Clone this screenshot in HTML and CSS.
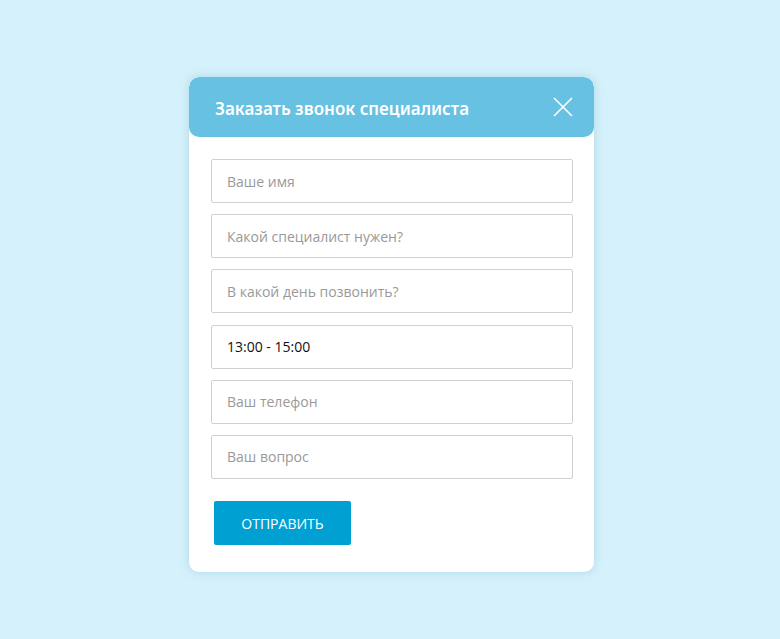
FILE: index.html
```html
<!DOCTYPE html>
<html lang="ru">
<head>
<meta charset="utf-8">
<title>Заказать звонок специалиста</title>
<link rel="stylesheet" href="styles.css">
</head>
<body>
<div class="page">
  <div class="modal">
    <div class="modal-header">
      <h2 class="modal-title">Заказать звонок специалиста</h2>
      <button class="close" type="button" aria-label="Закрыть">
        <svg width="20" height="20" viewBox="0 0 20 20"><path d="M1 1 L19 19 M19 1 L1 19" stroke="#fff" stroke-width="1.6" fill="none"/></svg>
      </button>
    </div>
    <form class="modal-body">
      <input class="field" type="text" placeholder="Ваше имя">
      <input class="field" type="text" placeholder="Какой специалист нужен?">
      <input class="field" type="text" placeholder="В какой день позвонить?">
      <input class="field" type="text" value="13:00 - 15:00">
      <input class="field" type="text" placeholder="Ваш телефон">
      <input class="field" type="text" placeholder="Ваш вопрос">
      <div class="actions">
        <button class="submit" type="button">Отправить</button>
      </div>
    </form>
  </div>
</div>
</body>
</html>
```
FILE: styles.css
```css
html, body {
  margin: 0;
  padding: 0;
  background: #d5f1fb;
  font-family: "Open Sans", "Noto Sans", sans-serif;
}
.page {
  width: 780px;
  height: 639px;
  display: flex;
  justify-content: center;
  align-items: flex-start;
  padding-top: 77px;
  box-sizing: border-box;
}
.modal {
  width: 405px;
  margin-left: 3px;
  background: #fff;
  border-radius: 10px;
  box-shadow: 0 0 10px rgba(100, 170, 200, 0.35);
  overflow: hidden;
}
.modal-header {
  height: 60px;
  background: #66c1e2;
  display: flex;
  align-items: center;
  justify-content: space-between;
  padding: 0 21px 0 26px;
  border-radius: 10px;
}
.modal-title {
  margin: 0;
  color: #fff;
  font-family: "Noto Sans", "Open Sans", sans-serif;
  font-size: 17px;
  font-weight: 600;
  letter-spacing: 0;
  position: relative;
  top: 1px;
}
.close {
  background: none;
  border: 0;
  padding: 0;
  width: 20px;
  height: 20px;
  display: block;
  cursor: pointer;
}
.close svg { display: block; }
.modal-body {
  display: flex;
  flex-direction: column;
  gap: 11.2px;
  padding: 22px 21px 27px 22px;
}
.field {
  display: block;
  height: 44px;
  box-sizing: border-box;
  border: 1px solid #d0d0d0;
  border-radius: 2px;
  padding: 0 15px;
  font-family: "Open Sans", sans-serif;
  font-size: 14px;
  color: #111;
  background: #fff;
  outline: none;
}
.field::placeholder { color: #999; }
.actions {
  padding-top: 11px;
  padding-left: 3px;
}
.submit {
  width: 137px;
  height: 44px;
  border: 0;
  border-radius: 2px;
  background: #00a0d3;
  color: #fff;
  font-family: "Open Sans", sans-serif;
  font-size: 14px;
  text-transform: uppercase;
  cursor: pointer;
}
```
